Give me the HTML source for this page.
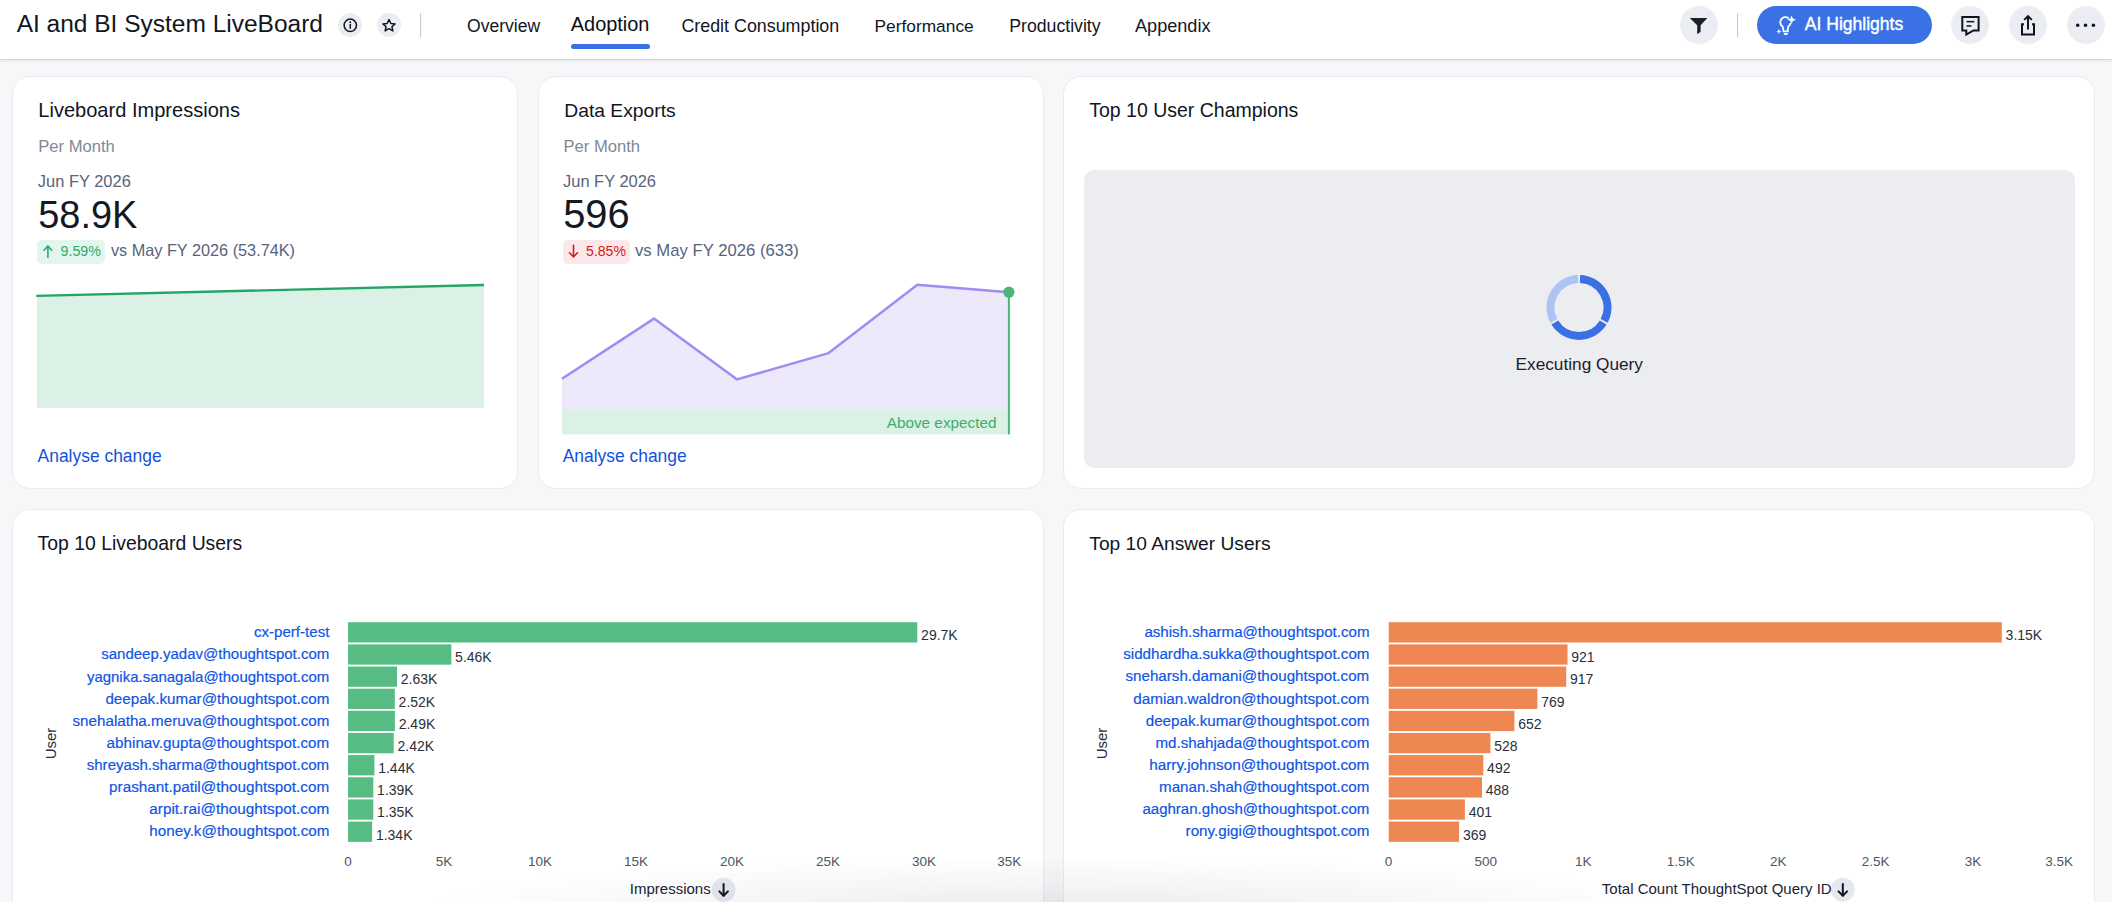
<!DOCTYPE html>
<html><head><meta charset="utf-8"><title>AI and BI System LiveBoard</title>
<style>
*{box-sizing:border-box;margin:0;padding:0}
html,body{width:2112px;height:902px;overflow:hidden;background:#f6f7f9;font-family:"Liberation Sans",sans-serif;}
.t{position:absolute;line-height:1;white-space:nowrap}
.abs{position:absolute}
.hdr{position:absolute;left:0;top:0;width:2112px;height:59px;background:#fff;box-shadow:0 1px 5px rgba(30,40,60,.09),0 1px 1px rgba(30,40,60,.10);z-index:5}
.card{position:absolute;background:#fff;border:1px solid #e9ebf0;border-radius:18px}
.cbtn{position:absolute;border-radius:50%;background:#ebedf2}
</style></head><body>
<div class="hdr">
<div class="t" style="left:16.70px;top:12.00px;font-size:24.49px;color:#0f1621;">AI and BI System LiveBoard</div>
<div class="cbtn" style="left:338.3px;top:13.2px;width:24px;height:24px"></div>
<div class="cbtn" style="left:377px;top:13.2px;width:24px;height:24px"></div>
<svg class="abs" style="left:0;top:0" width="2112" height="59" viewBox="0 0 2112 59">
<circle cx="350.3" cy="25.3" r="6.2" fill="none" stroke="#0f1621" stroke-width="1.5"/>
<circle cx="350.3" cy="22.3" r="0.95" fill="#0f1621"/>
<rect x="349.55" y="24.0" width="1.5" height="4.8" fill="#0f1621"/>
<path transform="translate(0,0.7)" d="M389,18.9 L390.9,22.8 L395.1,23.2 L391.9,26.0 L392.9,30.2 L389,28.0 L385.1,30.2 L386.1,26.0 L382.9,23.2 L387.1,22.8 Z" fill="none" stroke="#0f1621" stroke-width="1.5" stroke-linejoin="round"/>
<rect x="420.1" y="13.3" width="1.1" height="23.8" fill="#c3c8d1"/>
<rect x="1737" y="13.2" width="1.1" height="23.7" fill="#c3c8d1"/>
</svg>
<div class="t" style="left:467.10px;top:18.00px;font-size:17.55px;color:#11161f;">Overview</div>
<div class="t" style="left:681.40px;top:18.00px;font-size:17.88px;color:#11161f;">Credit Consumption</div>
<div class="t" style="left:874.50px;top:18.00px;font-size:17.34px;color:#11161f;">Performance</div>
<div class="t" style="left:1009.20px;top:18.00px;font-size:17.71px;color:#11161f;">Productivity</div>
<div class="t" style="left:1135.00px;top:17.00px;font-size:18.11px;color:#11161f;">Appendix</div>
<div class="t" style="left:570.80px;top:15.00px;font-size:19.93px;color:#0b0f17;">Adoption</div>
<div class="abs" style="left:570.8px;top:44.1px;width:79.3px;height:5.2px;border-radius:3px;background:#3b6fe4"></div>
<div class="cbtn" style="left:1679.6px;top:6.1px;width:38px;height:38px"></div>
<div class="abs" style="left:1757.4px;top:6px;width:174.4px;height:38px;border-radius:19px;background:#3a72e5"></div>
<div class="t" style="left:1804.80px;top:16.00px;font-size:17.55px;color:#ffffff;-webkit-text-stroke:0.4px #fff;">AI Highlights</div>
<div class="cbtn" style="left:1951.3px;top:6.1px;width:38px;height:38px"></div>
<div class="cbtn" style="left:2009.0px;top:6.1px;width:38px;height:38px"></div>
<div class="cbtn" style="left:2066.8px;top:6.1px;width:38px;height:38px"></div>
<svg class="abs" style="left:0;top:0" width="2112" height="59" viewBox="0 0 2112 59">
<path d="M1689.8,17.9 L1707.4,17.9 L1700.6,25.2 L1700.6,31.8 L1697.2,34.2 L1697.2,25.2 Z" fill="#1a1f29"/>
<g fill="none" stroke="#fff" stroke-width="1.8" stroke-linecap="round" stroke-linejoin="round">
<path d="M1788.3,17.9 A5.1,5.1 0 1 0 1782.6,26.6 L1783.5,30.4"/>
<path d="M1787.7,30.4 L1788.2,26.6 A5.1,5.1 0 0 0 1790.4,23.6"/>
<path d="M1783.4,31.3 L1788.0,31.3"/>
</g>
<path d="M1783.6,33.0 L1788.0,33.0 L1787.6,34.4 Q1785.8,35.6 1784.0,34.4 Z" fill="#fff"/>
<path d="M1791.60,15.40 L1792.89,18.41 L1795.90,19.70 L1792.89,20.99 L1791.60,24.00 L1790.31,20.99 L1787.30,19.70 L1790.31,18.41 Z" fill="#fff"/>
<path d="M1778.90,28.90 L1779.65,30.65 L1781.40,31.40 L1779.65,32.15 L1778.90,33.90 L1778.15,32.15 L1776.40,31.40 L1778.15,30.65 Z" fill="#fff"/>
<g fill="none" stroke="#0f1621" stroke-width="2" stroke-linejoin="miter">
<path d="M1962.3,16.9 L1978.6,16.9 L1978.6,30.4 L1973.5,30.4 L1966.3,34.6 L1966.3,30.4 L1962.3,30.4 Z"/>
</g>
<rect x="1966.5" y="20.9" width="7.8" height="1.5" fill="#0f1621"/>
<rect x="1966.5" y="25.2" width="4.9" height="1.5" fill="#0f1621"/>
<g fill="none" stroke="#0f1621" stroke-width="2">
<path d="M2024,24.2 L2022,24.2 L2022,34.6 L2034,34.6 L2034,24.2 L2032,24.2"/>
<path d="M2028,29.5 L2028,16.5"/>
<path d="M2024.2,19.9 L2028,16.1 L2031.8,19.9"/>
</g>
<circle cx="2077.7" cy="25.3" r="1.75" fill="#0f1621"/>
<circle cx="2085.5" cy="25.3" r="1.75" fill="#0f1621"/>
<circle cx="2093.4" cy="25.3" r="1.75" fill="#0f1621"/>
</svg>
</div>
<div class="card" style="left:12px;top:76px;width:506px;height:413px"></div>
<div class="card" style="left:538px;top:76px;width:506px;height:413px"></div>
<div class="card" style="left:1063px;top:76px;width:1032px;height:413px"></div>
<div class="card" style="left:12px;top:509px;width:1032px;height:460px"></div>
<div class="card" style="left:1063px;top:509px;width:1032px;height:460px"></div>
<div class="t" style="left:38.30px;top:100.00px;font-size:20.06px;color:#10151f;">Liveboard Impressions</div>
<div class="t" style="left:38.30px;top:139.00px;font-size:16.58px;color:#7f8898;">Per Month</div>
<div class="t" style="left:37.80px;top:173.00px;font-size:16.47px;color:#5a6478;">Jun FY 2026</div>
<div class="t" style="left:38.20px;top:197.00px;font-size:37.96px;color:#141a24;">58.9K</div>
<div class="abs" style="left:37.3px;top:240.1px;width:67.6px;height:24.0px;border-radius:5px;background:#e2f6ed"></div>
<svg class="abs" style="left:0;top:0" width="1100" height="300"><g fill="none" stroke="#28ad6b" stroke-width="1.6" stroke-linecap="round" stroke-linejoin="round"><path d="M47.9,257.4 L47.9,246.2"/><path d="M44.0,250.2 L47.9,246.1 L51.8,250.2"/></g></svg>
<div class="t" style="left:60.50px;top:244.00px;font-size:14.25px;color:#28ad6b;">9.59%</div>
<div class="t" style="left:110.90px;top:242.00px;font-size:16.27px;color:#58637a;">vs May FY 2026 (53.74K)</div>
<div class="t" style="left:37.60px;top:448.00px;font-size:17.43px;color:#1152e0;">Analyse change</div>
<div class="t" style="left:564.30px;top:101.00px;font-size:19.27px;color:#10151f;">Data Exports</div>
<div class="t" style="left:563.50px;top:139.00px;font-size:16.58px;color:#7f8898;">Per Month</div>
<div class="t" style="left:563.00px;top:173.00px;font-size:16.45px;color:#5a6478;">Jun FY 2026</div>
<div class="t" style="left:563.20px;top:195.00px;font-size:39.87px;color:#141a24;">596</div>
<div class="abs" style="left:563.1px;top:240.1px;width:66.7px;height:24.3px;border-radius:5px;background:#fbe8ea"></div>
<svg class="abs" style="left:0;top:0" width="1100" height="300"><g fill="none" stroke="#d41820" stroke-width="1.6" stroke-linecap="round" stroke-linejoin="round"><path d="M573.5,245.4 L573.5,256.6"/><path d="M569.5,252.8 L573.5,256.8 L577.5,252.8"/></g></svg>
<div class="t" style="left:586.10px;top:244.00px;font-size:14.04px;color:#d41820;">5.85%</div>
<div class="t" style="left:635.00px;top:243.00px;font-size:16.71px;color:#58637a;">vs May FY 2026 (633)</div>
<div class="t" style="left:562.70px;top:448.00px;font-size:17.43px;color:#1152e0;">Analyse change</div>
<svg class="abs" style="left:0;top:0" width="1100" height="500">
<polygon points="37,296 484,285 484,408 37,408" fill="#dcf1e5"/>
<line x1="36.3" y1="295.9" x2="484" y2="285" stroke="#22a565" stroke-width="2.4"/>
<polygon points="562,378.7 654,318.6 737.1,379.4 828.6,353.1 917.4,284.8 1008.9,292.2 1008.9,408.8 562,408.8" fill="#ede9fa"/>
<rect x="562" y="408.8" width="446.9" height="25.6" fill="#dcf1e5"/>
<polyline points="562,378.7 654,318.6 737.1,379.4 828.6,353.1 917.4,284.8 1008.9,292.2" fill="none" stroke="#a08cf0" stroke-width="2.5" stroke-linejoin="round"/>
<line x1="1008.9" y1="292" x2="1008.9" y2="434.4" stroke="#4cb67a" stroke-width="2"/>
<circle cx="1008.9" cy="292.2" r="5.6" fill="#4cb67a"/>
</svg>
<div class="t" style="left:886.70px;top:415.00px;font-size:15.32px;color:#3aae6e;">Above expected</div>
<div class="t" style="left:1089.30px;top:101.00px;font-size:19.49px;color:#10151f;">Top 10 User Champions</div>
<div class="abs" style="left:1083.7px;top:170.1px;width:990.9px;height:298.1px;border-radius:10px;background:#ecedf1"></div>
<svg class="abs" style="left:0;top:0" width="2112" height="500">
<g fill="none" stroke-width="8">
<path d="M1579.99,278.92 A28.5,28.5 0 0 1 1604.16,320.78" stroke="#3b70e4"/>
<path d="M1603.17,322.50 A28.5,28.5 0 0 1 1554.83,322.50" stroke="#3b70e4"/>
<path d="M1553.84,320.78 A28.5,28.5 0 0 1 1578.01,278.92" stroke="#acc3f3"/>
</g></svg>
<div class="t" style="left:1515.60px;top:356.00px;font-size:17.23px;color:#1b2029;">Executing Query</div>
<div class="t" style="left:37.60px;top:534.00px;font-size:19.39px;color:#10151f;">Top 10 Liveboard Users</div>
<div class="t" style="left:1089.30px;top:534.00px;font-size:19.21px;color:#10151f;">Top 10 Answer Users</div>
<svg class="abs" style="left:0;top:0" width="2112" height="902"><rect x="348.0" y="622.20" width="569.30" height="20.3" fill="#57bb84"/><rect x="348.0" y="644.35" width="103.30" height="20.3" fill="#57bb84"/><rect x="348.0" y="666.50" width="49.00" height="20.3" fill="#57bb84"/><rect x="348.0" y="688.65" width="46.80" height="20.3" fill="#57bb84"/><rect x="348.0" y="710.80" width="46.90" height="20.3" fill="#57bb84"/><rect x="348.0" y="732.95" width="45.70" height="20.3" fill="#57bb84"/><rect x="348.0" y="755.10" width="26.40" height="20.3" fill="#57bb84"/><rect x="348.0" y="777.25" width="25.30" height="20.3" fill="#57bb84"/><rect x="348.0" y="799.40" width="25.30" height="20.3" fill="#57bb84"/><rect x="348.0" y="821.55" width="24.10" height="20.3" fill="#57bb84"/><circle cx="723.6" cy="889.8" r="12" fill="#e6e8ee"/><g fill="none" stroke="#0f1621" stroke-width="2" stroke-linecap="round" stroke-linejoin="round"><path d="M723.6,884 L723.6,895.6"/><path d="M719.3000000000001,891.4 L723.6,895.8 L727.9,891.4"/></g></svg>
<div class="t" style="left:253.90px;top:624.00px;font-size:15.1px;color:#0f55e6;-webkit-text-stroke:0.2px #0f55e6;">cx-perf-test</div>
<div class="t" style="left:921.10px;top:628.00px;font-size:14px;color:#2b3038;">29.7K</div>
<div class="t" style="left:101.20px;top:646.00px;font-size:15.02px;color:#0f55e6;-webkit-text-stroke:0.2px #0f55e6;">sandeep.yadav@thoughtspot.com</div>
<div class="t" style="left:455.10px;top:650.00px;font-size:14px;color:#2b3038;">5.46K</div>
<div class="t" style="left:86.90px;top:669.00px;font-size:14.98px;color:#0f55e6;-webkit-text-stroke:0.2px #0f55e6;">yagnika.sanagala@thoughtspot.com</div>
<div class="t" style="left:400.80px;top:672.00px;font-size:14px;color:#2b3038;">2.63K</div>
<div class="t" style="left:105.40px;top:691.00px;font-size:15.19px;color:#0f55e6;-webkit-text-stroke:0.2px #0f55e6;">deepak.kumar@thoughtspot.com</div>
<div class="t" style="left:398.60px;top:695.00px;font-size:14px;color:#2b3038;">2.52K</div>
<div class="t" style="left:72.50px;top:713.00px;font-size:15.19px;color:#0f55e6;-webkit-text-stroke:0.2px #0f55e6;">snehalatha.meruva@thoughtspot.com</div>
<div class="t" style="left:398.70px;top:717.00px;font-size:14px;color:#2b3038;">2.49K</div>
<div class="t" style="left:106.60px;top:735.00px;font-size:15.24px;color:#0f55e6;-webkit-text-stroke:0.2px #0f55e6;">abhinav.gupta@thoughtspot.com</div>
<div class="t" style="left:397.50px;top:739.00px;font-size:14px;color:#2b3038;">2.42K</div>
<div class="t" style="left:86.70px;top:757.00px;font-size:15.09px;color:#0f55e6;-webkit-text-stroke:0.2px #0f55e6;">shreyash.sharma@thoughtspot.com</div>
<div class="t" style="left:378.20px;top:761.00px;font-size:14px;color:#2b3038;">1.44K</div>
<div class="t" style="left:109.10px;top:779.00px;font-size:15.28px;color:#0f55e6;-webkit-text-stroke:0.2px #0f55e6;">prashant.patil@thoughtspot.com</div>
<div class="t" style="left:377.10px;top:783.00px;font-size:14px;color:#2b3038;">1.39K</div>
<div class="t" style="left:149.30px;top:801.00px;font-size:15.34px;color:#0f55e6;-webkit-text-stroke:0.2px #0f55e6;">arpit.rai@thoughtspot.com</div>
<div class="t" style="left:377.10px;top:805.00px;font-size:14px;color:#2b3038;">1.35K</div>
<div class="t" style="left:149.30px;top:823.00px;font-size:15.22px;color:#0f55e6;-webkit-text-stroke:0.2px #0f55e6;">honey.k@thoughtspot.com</div>
<div class="t" style="left:375.90px;top:828.00px;font-size:14px;color:#2b3038;">1.34K</div>
<div class="t" style="left:48.00px;width:600px;text-align:center;top:855.00px;font-size:13.5px;color:#4f5663;">0</div>
<div class="t" style="left:144.00px;width:600px;text-align:center;top:855.00px;font-size:13.5px;color:#4f5663;">5K</div>
<div class="t" style="left:240.00px;width:600px;text-align:center;top:855.00px;font-size:13.5px;color:#4f5663;">10K</div>
<div class="t" style="left:336.00px;width:600px;text-align:center;top:855.00px;font-size:13.5px;color:#4f5663;">15K</div>
<div class="t" style="left:432.00px;width:600px;text-align:center;top:855.00px;font-size:13.5px;color:#4f5663;">20K</div>
<div class="t" style="left:528.00px;width:600px;text-align:center;top:855.00px;font-size:13.5px;color:#4f5663;">25K</div>
<div class="t" style="left:624.00px;width:600px;text-align:center;top:855.00px;font-size:13.5px;color:#4f5663;">30K</div>
<div class="t" style="right:1090.70px;top:855.00px;font-size:13.5px;color:#4f5663;">35K</div>
<div class="t" style="left:629.80px;top:881.00px;font-size:15px;color:#1d232f;">Impressions</div>
<div class="t" style="left:29.950000000000003px;top:736px;width:40px;text-align:center;font-size:15px;color:#2b3038;transform:rotate(-90deg)">User</div>
<svg class="abs" style="left:0;top:0" width="2112" height="902"><rect x="1388.7" y="622.20" width="613.10" height="20.3" fill="#ef8753"/><rect x="1388.7" y="644.35" width="178.80" height="20.3" fill="#ef8753"/><rect x="1388.7" y="666.50" width="177.50" height="20.3" fill="#ef8753"/><rect x="1388.7" y="688.65" width="148.70" height="20.3" fill="#ef8753"/><rect x="1388.7" y="710.80" width="125.70" height="20.3" fill="#ef8753"/><rect x="1388.7" y="732.95" width="101.70" height="20.3" fill="#ef8753"/><rect x="1388.7" y="755.10" width="94.60" height="20.3" fill="#ef8753"/><rect x="1388.7" y="777.25" width="93.30" height="20.3" fill="#ef8753"/><rect x="1388.7" y="799.40" width="76.20" height="20.3" fill="#ef8753"/><rect x="1388.7" y="821.55" width="70.40" height="20.3" fill="#ef8753"/><circle cx="1842.8" cy="889.8" r="12" fill="#e6e8ee"/><g fill="none" stroke="#0f1621" stroke-width="2" stroke-linecap="round" stroke-linejoin="round"><path d="M1842.8,884 L1842.8,895.6"/><path d="M1838.5,891.4 L1842.8,895.8 L1847.1,891.4"/></g></svg>
<div class="t" style="left:1144.40px;top:624.00px;font-size:15.1px;color:#0f55e6;-webkit-text-stroke:0.2px #0f55e6;">ashish.sharma@thoughtspot.com</div>
<div class="t" style="left:2005.60px;top:628.00px;font-size:14px;color:#2b3038;">3.15K</div>
<div class="t" style="left:1123.20px;top:646.00px;font-size:15.16px;color:#0f55e6;-webkit-text-stroke:0.2px #0f55e6;">siddhardha.sukka@thoughtspot.com</div>
<div class="t" style="left:1571.30px;top:650.00px;font-size:14px;color:#2b3038;">921</div>
<div class="t" style="left:1125.50px;top:668.00px;font-size:15.17px;color:#0f55e6;-webkit-text-stroke:0.2px #0f55e6;">sneharsh.damani@thoughtspot.com</div>
<div class="t" style="left:1570.00px;top:672.00px;font-size:14px;color:#2b3038;">917</div>
<div class="t" style="left:1133.20px;top:691.00px;font-size:15.28px;color:#0f55e6;-webkit-text-stroke:0.2px #0f55e6;">damian.waldron@thoughtspot.com</div>
<div class="t" style="left:1541.20px;top:695.00px;font-size:14px;color:#2b3038;">769</div>
<div class="t" style="left:1145.70px;top:713.00px;font-size:15.18px;color:#0f55e6;-webkit-text-stroke:0.2px #0f55e6;">deepak.kumar@thoughtspot.com</div>
<div class="t" style="left:1518.20px;top:717.00px;font-size:14px;color:#2b3038;">652</div>
<div class="t" style="left:1155.40px;top:735.00px;font-size:15.15px;color:#0f55e6;-webkit-text-stroke:0.2px #0f55e6;">md.shahjada@thoughtspot.com</div>
<div class="t" style="left:1494.20px;top:739.00px;font-size:14px;color:#2b3038;">528</div>
<div class="t" style="left:1149.20px;top:757.00px;font-size:15.3px;color:#0f55e6;-webkit-text-stroke:0.2px #0f55e6;">harry.johnson@thoughtspot.com</div>
<div class="t" style="left:1487.10px;top:761.00px;font-size:14px;color:#2b3038;">492</div>
<div class="t" style="left:1159.10px;top:779.00px;font-size:15.12px;color:#0f55e6;-webkit-text-stroke:0.2px #0f55e6;">manan.shah@thoughtspot.com</div>
<div class="t" style="left:1485.80px;top:783.00px;font-size:14px;color:#2b3038;">488</div>
<div class="t" style="left:1142.40px;top:801.00px;font-size:15.06px;color:#0f55e6;-webkit-text-stroke:0.2px #0f55e6;">aaghran.ghosh@thoughtspot.com</div>
<div class="t" style="left:1468.70px;top:805.00px;font-size:14px;color:#2b3038;">401</div>
<div class="t" style="left:1185.60px;top:823.00px;font-size:15.18px;color:#0f55e6;-webkit-text-stroke:0.2px #0f55e6;">rony.gigi@thoughtspot.com</div>
<div class="t" style="left:1462.90px;top:828.00px;font-size:14px;color:#2b3038;">369</div>
<div class="t" style="left:1088.40px;width:600px;text-align:center;top:855.00px;font-size:13.5px;color:#4f5663;">0</div>
<div class="t" style="left:1185.85px;width:600px;text-align:center;top:855.00px;font-size:13.5px;color:#4f5663;">500</div>
<div class="t" style="left:1283.30px;width:600px;text-align:center;top:855.00px;font-size:13.5px;color:#4f5663;">1K</div>
<div class="t" style="left:1380.75px;width:600px;text-align:center;top:855.00px;font-size:13.5px;color:#4f5663;">1.5K</div>
<div class="t" style="left:1478.20px;width:600px;text-align:center;top:855.00px;font-size:13.5px;color:#4f5663;">2K</div>
<div class="t" style="left:1575.65px;width:600px;text-align:center;top:855.00px;font-size:13.5px;color:#4f5663;">2.5K</div>
<div class="t" style="left:1673.10px;width:600px;text-align:center;top:855.00px;font-size:13.5px;color:#4f5663;">3K</div>
<div class="t" style="right:39.00px;top:855.00px;font-size:13.5px;color:#4f5663;">3.5K</div>
<div class="t" style="left:1601.80px;top:881.00px;font-size:15px;color:#1d232f;">Total Count ThoughtSpot Query ID</div>
<div class="t" style="left:1080.9px;top:736px;width:40px;text-align:center;font-size:15px;color:#2b3038;transform:rotate(-90deg)">User</div>
<div class="abs" style="left:0;top:840px;width:2112px;height:62px;z-index:3;pointer-events:none;background:radial-gradient(ellipse 640px 52px at 1054px 68px, rgba(20,25,40,0.085) 0%, rgba(20,25,40,0.045) 45%, rgba(20,25,40,0) 100%)"></div>
</body></html>
